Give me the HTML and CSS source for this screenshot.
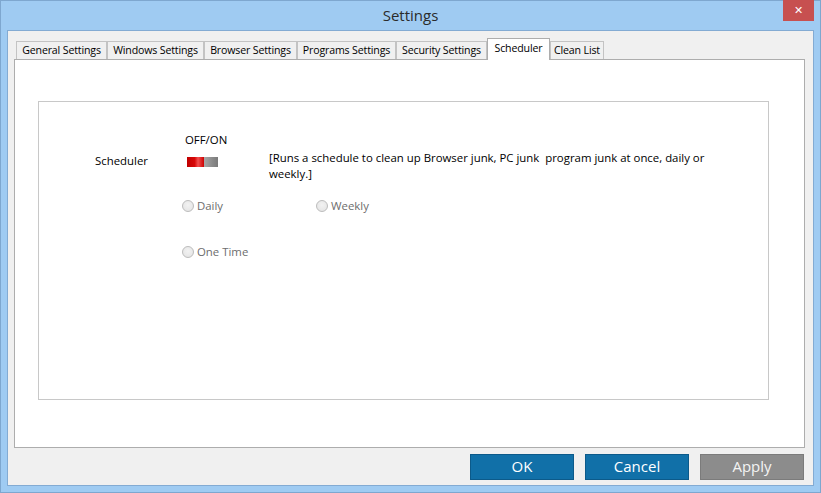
FILE: index.html
```html
<!DOCTYPE html>
<html lang="en">
<head>
    <meta charset="UTF-8">
    <meta name="viewport" content="width=device-width, initial-scale=1.0">
    <title>Settings</title>
    <link rel="stylesheet" href="styles.css">
</head>
<body>
    <div class="window">
        <div class="titlebar">
            <span class="title">Settings</span>
            <button class="close">&#x2715;</button>
        </div>
        <div class="client">
            <div class="tabs">
                <div class="tab t-general">General Settings</div>
                <div class="tab t-windows">Windows Settings</div>
                <div class="tab t-browser">Browser Settings</div>
                <div class="tab t-programs">Programs Settings</div>
                <div class="tab t-security">Security Settings</div>
                <div class="tab t-scheduler active">Scheduler</div>
                <div class="tab t-clean">Clean List</div>
            </div>
            <div class="panel">
                <div class="box">
                    <div class="onoff">OFF/ON</div>
                    <div class="main-row">
                        <span class="label">Scheduler</span>
                        <span class="toggle"><span class="toggle-on"></span><span class="toggle-off"></span></span>
                        <span class="desc">[Runs a schedule to clean up Browser junk, PC junk &nbsp;program junk at once, daily or<br>weekly.]</span>
                    </div>
                    <div class="radio-row first">
                        <label class="radio daily"><span class="dot"></span>Daily</label>
                        <label class="radio"><span class="dot"></span>Weekly</label>
                    </div>
                    <div class="radio-row second">
                        <label class="radio"><span class="dot"></span>One Time</label>
                    </div>
                </div>
            </div>
            <div class="footer">
                <button class="btn">OK</button>
                <button class="btn">Cancel</button>
                <button class="btn disabled">Apply</button>
            </div>
        </div>
    </div>
</body>
</html>
```

FILE: styles.css
```css
body {
    margin: 0;
    font-family: "Open Sans", "Noto Sans", sans-serif;
    font-size: 11.4px;
    color: #000;
}

.window {
    width: 821px;
    height: 493px;
    box-sizing: border-box;
    background: #9fcbf2;
    border: 1px solid #7ea7cf;
    padding: 0 6px 6px 6px;
    display: flex;
    flex-direction: column;
}

.titlebar {
    height: 29px;
    position: relative;
    display: flex;
    justify-content: center;
    align-items: center;
}

.title {
    font-size: 15px;
    color: #2b2b2b;
    margin-top: -2px;
}

.close {
    position: absolute;
    right: 0;
    top: -1px;
    width: 31px;
    height: 21px;
    border: none;
    background: #c75050;
    color: #fff;
    font-size: 11px;
    font-weight: bold;
    padding: 0;
    font-family: "DejaVu Sans", sans-serif;
}

.client {
    flex: 1;
    background: #f0f0f0;
    border: 1px solid #83abd3;
    padding: 7px 8px 0 6px;
    display: flex;
    flex-direction: column;
}

.tabs {
    display: flex;
    height: 21px;
    padding-left: 2px;
    position: relative;
    z-index: 1;
}

.tab {
    box-sizing: border-box;
    height: 18px;
    margin-top: 3px;
    border: 1px solid #c3c3c3;
    border-bottom: none;
    background: #f0f0f0;
    text-align: center;
    line-height: 16px;
    font-size: 10.6px;
    letter-spacing: -0.15px;
    white-space: nowrap;
    overflow: hidden;
    color: #000;
}

.tab.active {
    height: 22px;
    margin-top: 0;
    background: #fff;
    border-color: #adadad;
    line-height: 18px;
}

.t-general { width: 91px; }
.t-windows { width: 97px; }
.t-browser { width: 93px; }
.t-programs { width: 99px; }
.t-security { width: 91px; }
.t-scheduler { width: 63px; }
.t-clean { width: 54px; }

.panel {
    box-sizing: border-box;
    width: 791px;
    height: 389px;
    background: #fff;
    border: 1px solid #adadad;
    padding: 41px 0 0 23px;
}

.box {
    box-sizing: border-box;
    width: 731px;
    height: 299px;
    border: 1px solid #c8c8c8;
    padding-top: 30px;
}

.onoff {
    margin-left: 146px;
    line-height: 16px;
}

.main-row {
    display: flex;
    margin-top: 2px;
}

.label {
    width: 91px;
    margin-left: 56px;
    margin-top: 3px;
    line-height: 16px;
}

.toggle {
    display: flex;
    width: 31px;
    height: 10px;
    margin-top: 7px;
    margin-right: 51px;
    margin-left: 1px;
}

.toggle-on {
    width: 17px;
    background: linear-gradient(90deg, #c00000 0, #d80808 45%, #f25050 65%, #cc0000 100%);
}

.toggle-off {
    width: 14px;
    background: linear-gradient(90deg, #a8a8a8 0, #8a8a8a 60%, #7a7a7a 100%);
}

.desc {
    line-height: 16px;
}

.radio-row {
    display: flex;
    padding-left: 143px;
}

.radio-row.first {
    margin-top: 16px;
}

.radio-row.second {
    margin-top: 30px;
}

.radio {
    display: flex;
    align-items: center;
    line-height: 16px;
    color: #6d6d6d;
}

.radio.daily {
    width: 134px;
}

.dot {
    box-sizing: border-box;
    width: 12px;
    height: 12px;
    border-radius: 50%;
    border: 1px solid #bcbcbc;
    background: radial-gradient(circle at 50% 40%, #f2f2f2 0, #e2e2e2 100%);
    margin-right: 3px;
}

.footer {
    display: flex;
    justify-content: flex-end;
    gap: 11px;
    margin-top: 6px;
    padding-right: 1px;
}

.btn {
    box-sizing: border-box;
    width: 104px;
    height: 26px;
    background: #1170a8;
    border: 1px solid #0c5a8a;
    color: #fff;
    font-family: "Open Sans", "Noto Sans", sans-serif;
    font-size: 15px;
    padding: 0 0 2px 0;
}

.btn.disabled {
    background: #8c8c8c;
    border-color: #7b7b7b;
    color: #f4f4f4;
}
```
